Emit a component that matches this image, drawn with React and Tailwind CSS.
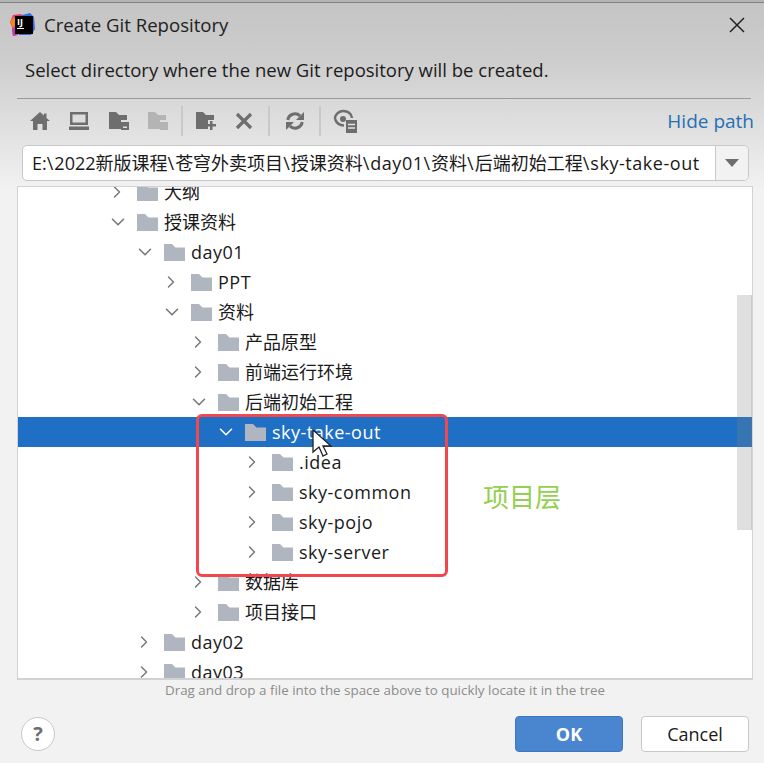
import React from 'react';
import { ChevronRight, ChevronDown } from 'lucide-react';

const SANS = "font-['Open_Sans','Noto_Sans_CJK_SC',sans-serif]";

const ROWS = [
  { depth: 0, open: false, name: '大纲' },
  { depth: 0, open: true, name: '授课资料' },
  { depth: 1, open: true, name: 'day01', latin: true },
  { depth: 2, open: false, name: 'PPT', latin: true },
  { depth: 2, open: true, name: '资料' },
  { depth: 3, open: false, name: '产品原型' },
  { depth: 3, open: false, name: '前端运行环境' },
  { depth: 3, open: true, name: '后端初始工程' },
  { depth: 4, open: true, name: 'sky-take-out', latin: true, selected: true },
  { depth: 5, open: false, name: '.idea', latin: true },
  { depth: 5, open: false, name: 'sky-common', latin: true },
  { depth: 5, open: false, name: 'sky-pojo', latin: true },
  { depth: 5, open: false, name: 'sky-server', latin: true },
  { depth: 3, open: false, name: '数据库' },
  { depth: 3, open: false, name: '项目接口' },
  { depth: 1, open: false, name: 'day02', latin: true },
  { depth: 1, open: false, name: 'day03', latin: true },
];

const INDENT = ['pl-[91px]', 'pl-[118px]', 'pl-[145px]', 'pl-[172px]', 'pl-[199px]', 'pl-[226px]'];

const Folder = () => (
  <svg width="21" height="17" viewBox="0 0 21 17" className="fill-[#afb6c0]">
    <path d="M0 0h8l3.500 3.500H21V17H0z" />
  </svg>
);

const ToolFolder = ({ badge, color = '#6e6e6e' }) => (
  <svg width="20" height="20" viewBox="0 0 20 20" fill={color}>
    <path d="M0 1h7l3 3h8v5h-6v9H0z" />
    {badge === 'plus' && <path d="M14 10h2.500v3H20v2.500h-3.500V19H14v-3.500h-3V13h3z" />}
    {badge === 'box' && (
      <path fillRule="evenodd" d="M12 11h8v8h-8zM14 15.500v1.500h4v-1.500z" />
    )}
    {badge === 'solid' && <path d="M12 11h8v8h-8z" />}
  </svg>
);

const Sep = () => <div className="w-0.5 h-[30px] bg-[#c9c9c9]" />;

const Toolbar = () => (
  <div className="flex items-center pl-[30px] h-[30px]">
    <svg width="20" height="18" viewBox="0 0 20 18" fill="#6e6e6e">
      <path d="M10 0l4 3.600V1.500h2.500v4.400L20 9h-3v9h-4.500v-6h-5v6H3V9H0z" />
    </svg>
    <svg width="20" height="18" viewBox="0 0 20 18" className="ml-[19px]" fill="#6e6e6e">
      <path fillRule="evenodd" d="M1 0h18v13H1zM3.500 2.500v8h13v-8zM0 14.500h20V18H0z" />
    </svg>
    <div className="ml-[20px]"><ToolFolder badge="box" /></div>
    <div className="ml-[19px]"><ToolFolder badge="solid" color="#b4b4b4" /></div>
    <div className="ml-[13px] mr-[13px]"><Sep /></div>
    <ToolFolder badge="plus" />
    <svg width="18" height="18" viewBox="0 0 18 18" className="ml-[19px]">
      <path d="M2 2l14 14M16 2L2 16" stroke="#6e6e6e" strokeWidth="3.200" />
    </svg>
    <div className="ml-[15px] mr-[15px]"><Sep /></div>
    <svg width="20" height="20" viewBox="0 0 20 20" fill="none">
      <path d="M2.800 9A7.300 7.300 0 0 1 15 4.800" stroke="#6e6e6e" strokeWidth="3" />
      <path d="M17.200 11A7.300 7.300 0 0 1 5 15.200" stroke="#6e6e6e" strokeWidth="3" />
      <path d="M19 1v8h-8zM1 19v-8h8z" fill="#6e6e6e" />
    </svg>
    <div className="ml-[14px] mr-[12px]"><Sep /></div>
    <svg width="25" height="24" viewBox="0 0 25 24" fill="none">
      <path d="M2 10a8.500 7.500 0 0 1 17-1" stroke="#6e6e6e" strokeWidth="2.500" />
      <path d="M2 10c1.500 4 5 6.500 9 6.500" stroke="#6e6e6e" strokeWidth="2.500" />
      <circle cx="10" cy="10" r="3" fill="#6e6e6e" />
      <path d="M13 11h11v13H13z" fill="#6e6e6e" />
      <path d="M15 15.500h7M15 19h7" stroke="#e4e4e4" strokeWidth="1.500" />
    </svg>
    <a className={`ml-auto mr-[10px] text-[#2470b3] text-[19px] ${SANS}`}>Hide path</a>
  </div>
);

const TreeRow = ({ row }) => {
  const Chevron = row.open ? ChevronDown : ChevronRight;
  return (
    <div className={`flex items-center h-[30px] ${INDENT[row.depth]} ${row.selected ? 'bg-[#1f70c4] text-white' : 'text-[#1a1a1a]'}`}>
      <div className="w-[30px] -ml-[2px] flex">
        <Chevron size={row.open ? 22 : 20} strokeWidth={1.7} className={row.selected ? 'text-white' : 'text-[#777777]'} />
      </div>
      <Folder />
      <span className={`ml-[6px] text-[18px] whitespace-nowrap ${row.latin ? 'tracking-[0.5px]' : ''}`}>{row.name}</span>
    </div>
  );
};

export default function App() {
  return (
    <div className={`relative w-[764px] h-[763px] overflow-hidden bg-[linear-gradient(180deg,#c4c4c4_0px,#cdcdcd_60px,#e6e6e6_150px,#f2f2f2_190px)] ${SANS}`}>
      <div className="h-[3px] bg-[#b4b4b4] border-b border-[#828282]" />
      <div className="flex items-center h-[44px] pl-[10px] pr-[16px]">
        <div className="relative w-[25px] h-[24px]">
          <svg width="25" height="24" viewBox="0 0 25 24" className="absolute inset-0">
            <path d="M3 2l8-1 3 3-6 18-5 1-1-9-2-5z" fill="#e8386f" />
            <path d="M0 8l4-4 4 6-5 5z" fill="#f5851f" />
            <path d="M2 16l7-2-3 8-3 1z" fill="#b53ab8" />
            <path d="M12 2l8-2 4 4 1 12-4 6H9z" fill="#2f6fe0" />
          </svg>
          <div className="absolute left-[5px] top-[3px] w-[18px] h-[18px] bg-black text-white text-[9px] font-bold leading-[11px] pl-[2px]">
            IJ
            <div className="w-[7px] h-px bg-white mt-[1px]" />
          </div>
        </div>
        <span className="ml-[9px] text-[18.6px] text-[#222222]">Create Git Repository</span>
        <svg width="16" height="16" viewBox="0 0 16 16" className="ml-auto mr-[3px]">
          <path d="M1 1l14 14M15 1L1 15" stroke="#222222" strokeWidth="1.500" />
        </svg>
      </div>
      <div className="pl-[25px] pt-[10px] h-[51px] text-[18.5px] leading-[26px] text-[#1c1c1c]">Select directory where the new Git repository will be created.</div>
      <div className="ml-[17px] mr-[13px] h-px bg-[#9a9a9a]" />
      <div className="pt-[7px]"><Toolbar /></div>
      <div className="flex ml-[22px] mr-[15px] mt-[9px] h-[36px] bg-white border border-[#c8c8c8] rounded-[5px]">
        <div className="flex-1 pl-[9px] flex items-center text-[18px] text-[#1a1a1a] whitespace-pre overflow-hidden">
          <span>
            E:<span className="tracking-[1px]">\</span>2022新版课程<span className="tracking-[1px]">\</span>苍穹外卖项目<span className="tracking-[1px]">\</span>授课资料<span className="tracking-[1px]">\</span>
            <span className="tracking-[0.5px]">day01</span><span className="tracking-[1px]">\</span>资料<span className="tracking-[1px]">\</span>后端初始工程<span className="tracking-[1px]">\</span>
            <span className="tracking-[0.55px]">sky-take-out</span>
          </span>
        </div>
        <div className="w-[33px] border-l border-[#c8c8c8] bg-[#f2f2f2] rounded-r-[5px] flex items-center justify-center">
          <div className="w-0 h-0 border-x-[7px] border-x-transparent border-t-[8px] border-t-[#6e6e6e]" />
        </div>
      </div>
      <div className="relative ml-[17px] mr-[11px] mt-[5px] h-[494px] bg-white border-x border-t border-b-2 border-[#d2d2d2] overflow-hidden">
        <div className="-mt-[10px]">
          {ROWS.map((row) => <TreeRow key={row.name} row={row} />)}
        </div>
        {/* scrollbar */}
        <div className="absolute right-0 top-[108px] w-[15px] h-[235px] bg-[rgba(128,128,128,0.25)] border-r border-[rgba(128,128,128,0.2)]" />
        {/* red annotation */}
        <div className="absolute left-[178px] top-[227px] w-[252px] h-[163px] border-[3px] border-[#f0484e] rounded-[6px]" />
        <span className="absolute left-[465px] top-[291px] text-[26px] text-[#92d050]">项目层</span>
        <svg width="22" height="30" viewBox="0 0 22 30" className="absolute left-[294px] top-[242px]">
          <path d="M1 1v22l6-5 4 9 4-2-4-8h8z" fill="#fff" stroke="#222" strokeWidth="1.300" />
        </svg>
      </div>
      <div className="text-center text-[13.4px] leading-[20px] text-[#8c8c8c] pl-[6px]">Drag and drop a file into the space above to quickly locate it in the tree</div>
      <div className="flex items-center pl-[21px] pr-[15px] pt-[16px]">
        <div className="w-[34px] h-[34px] rounded-full bg-white border border-[#c8c8c8] flex items-center justify-center text-[20px] font-bold text-[#6e6e6e]">?</div>
        <button className="ml-auto w-[108px] h-[36px] rounded-[4px] bg-[#4a86d0] border border-[#3f78c2] text-white text-[18px] font-bold">OK</button>
        <button className="ml-[18px] w-[108px] h-[36px] rounded-[4px] bg-white border border-[#c8c8c8] text-[#1a1a1a] text-[18px]">Cancel</button>
      </div>
    </div>
  );
}
